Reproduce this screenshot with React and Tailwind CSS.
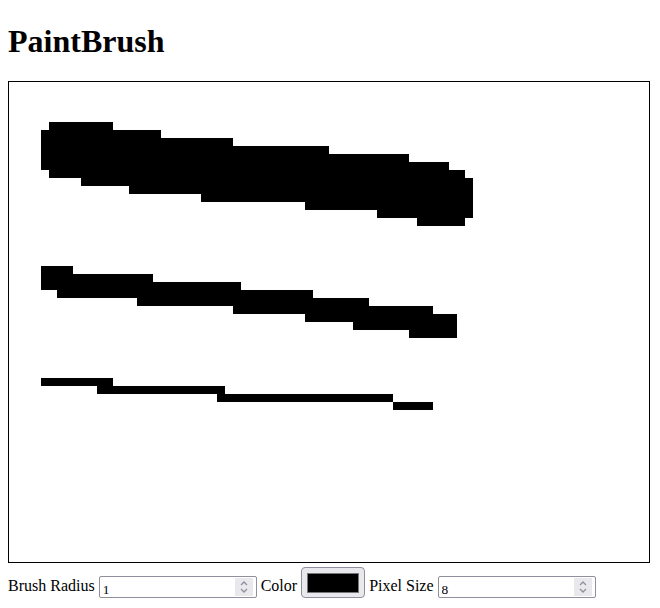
import React from 'react';

// pixel columns of each stroke: [x0, x1, y0, y1] in canvas px (8px grid)
const strokes = [
  // thick stroke
  [32, 40, 48, 88],
  [40, 72, 40, 96],
  [72, 104, 40, 104],
  [104, 120, 48, 104],
  [120, 152, 48, 112],
  [152, 192, 56, 112],
  [192, 224, 56, 120],
  [224, 296, 64, 120],
  [296, 320, 64, 128],
  [320, 368, 72, 128],
  [368, 400, 72, 136],
  [400, 408, 80, 136],
  [408, 440, 80, 144],
  [440, 456, 88, 144],
  [456, 464, 96, 136],
  // medium stroke
  [32, 48, 184, 208],
  [48, 64, 184, 216],
  [64, 128, 192, 216],
  [128, 144, 192, 224],
  [144, 224, 200, 224],
  [224, 232, 200, 232],
  [232, 296, 208, 232],
  [296, 304, 208, 240],
  [304, 344, 216, 240],
  [344, 360, 216, 248],
  [360, 400, 224, 248],
  [400, 424, 224, 256],
  [424, 448, 232, 256],
  // thin stroke
  [32, 104, 296, 304],
  [88, 216, 304, 312],
  [208, 384, 312, 320],
  [384, 424, 320, 328],
];

const NumberField = ({ value }) => (
  <div className="relative w-[158px] h-[22px] border border-[#8f8f9d] rounded-[2px] bg-white">
    <input
      type="number"
      defaultValue={value}
      className="w-full h-full pl-[3px] pr-[22px] pb-[2px] text-[13.33px] font-['Liberation_Serif',serif] text-black outline-none [appearance:textfield] [&::-webkit-inner-spin-button]:appearance-none [&::-webkit-outer-spin-button]:appearance-none"
    />
    <div className="absolute right-[3px] top-[1px] w-[18px] h-[18px] bg-[#e9e9ed] flex flex-col items-center justify-center pointer-events-none">
      <svg width="10" height="14" viewBox="0 0 10 14" fill="none" stroke="#8f8f9d" strokeWidth="1.3">
        <path d="M2 5 L5 2 L8 5" />
        <path d="M2 9 L5 12 L8 9" />
      </svg>
    </div>
  </div>
);

const App = () => {
  return (
    <div className="min-h-screen bg-white px-2 font-['Liberation_Serif',serif] text-black">
      <h1 className="text-[32px] font-bold leading-[37px] mt-[23px] mb-[21px]">PaintBrush</h1>

      <div className="w-[642px] h-[482px] border border-black bg-white">
        <svg width="640" height="480" viewBox="0 0 640 480" shapeRendering="crispEdges" className="block">
          {strokes.map(([x0, x1, y0, y1], i) => (
            <rect key={i} x={x0} y={y0} width={x1 - x0} height={y1 - y0} fill="#000" />
          ))}
        </svg>
      </div>

      <div className="flex items-end gap-1 mt-[4px] h-[31px]">
        <span className="text-[16px] leading-[18px] mb-[3px]">Brush Radius</span>
        <NumberField value={1} />
        <span className="text-[16px] leading-[18px] mb-[3px]">Color</span>
        <button className="w-[64px] h-[31px] border border-[#8f8f9d] rounded-[4px] bg-[#e9e9ed] flex items-center justify-center">
          <span className="block w-[52px] h-[20px] bg-black border border-[#777]" />
        </button>
        <span className="text-[16px] leading-[18px] mb-[3px]">Pixel Size</span>
        <NumberField value={8} />
      </div>
    </div>
  );
};

export default App;
